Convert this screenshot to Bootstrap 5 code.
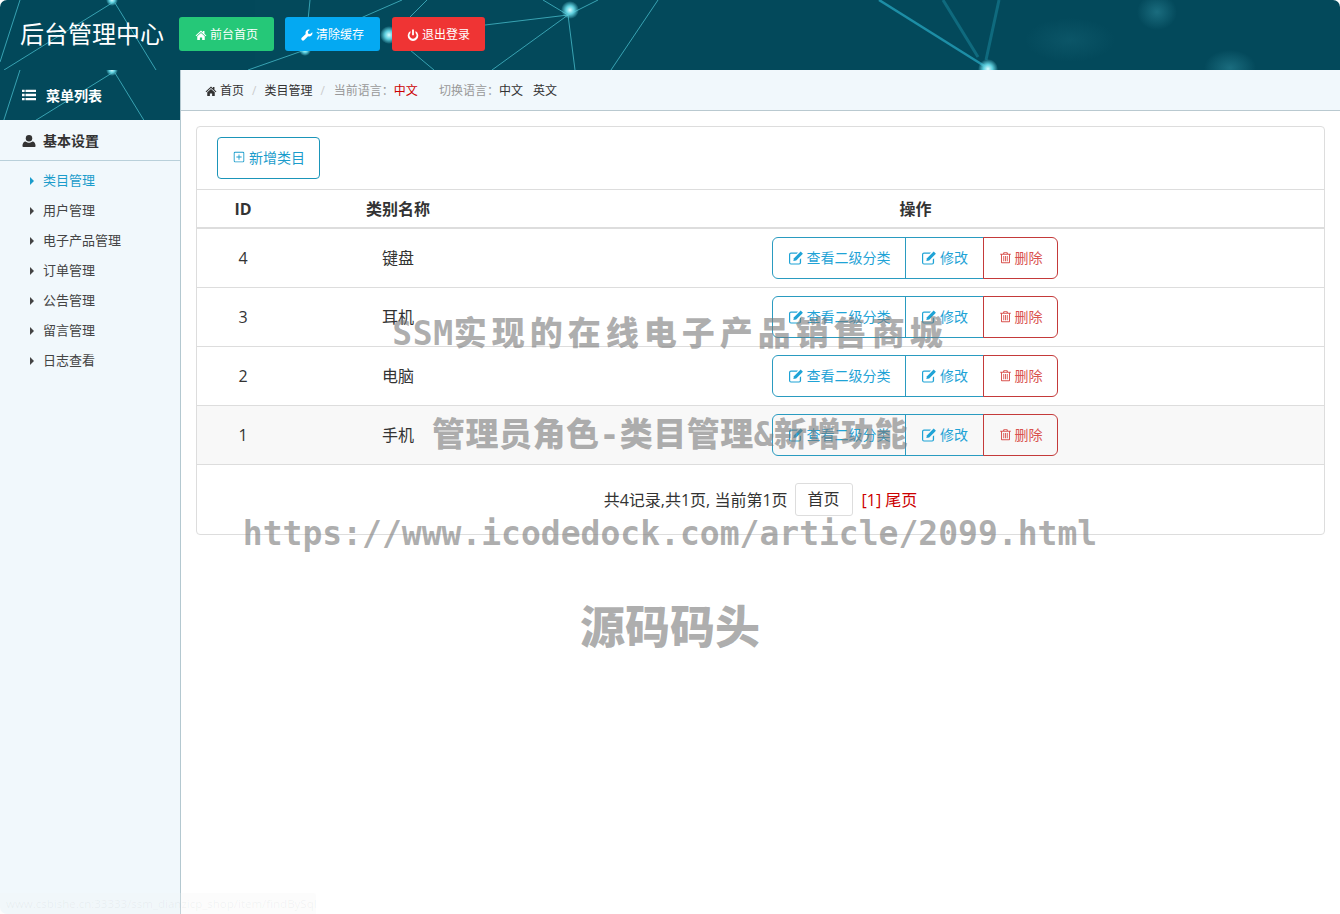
<!DOCTYPE html>
<html lang="zh-CN">
<head>
  <meta charset="UTF-8">
  <meta name="viewport" content="width=device-width, initial-scale=1.0">
  <title>后台管理中心</title>
  <link href="https://cdn.jsdelivr.net/npm/bootstrap@5.3.0/dist/css/bootstrap.min.css" rel="stylesheet">
  <style>
    html, body { height: 100%; }
    body {
      position: relative;
      font-family: "Open Sans", "Noto Sans CJK SC", sans-serif;
      color: #333;
      overflow: hidden;
    }
    .ico { width: 1em; height: 1em; fill: currentColor; flex: none; }

    /* header */
    .top-bar {
      position: relative;
      height: 70px;
      background: #03495b;
      border-radius: 7px 7px 0 0;
      overflow: hidden;
    }
    .net-bg { position: absolute; left: 0; top: 0; }
    .brand-title { position: relative; width: 179px; padding: 0 0 2px 20px; font-size: 24px; color: #fff; line-height: 34px; }
    .top-btn {
      position: relative;
      height: 34px;
      width: 95px;
      margin: 0 11px 2px 0;
      padding: 1px 0 0;
      font-size: 12px;
      color: #fff;
      border: 0;
      border-radius: 3px;
      display: inline-flex;
      align-items: center;
      justify-content: center;
      gap: 3px;
    }
    .top-btn:hover { color: #fff; }
    .top-btn .ico { font-size: 12px; }
    .tb-green { background: #25c878; }
    .tb-blue { background: #04a9f2; margin-right: 12px; }
    .tb-red { background: #ef3434; width: 93px; }

    /* sidebar */
    .page-body { height: 844px; }
    .side-col { width: 181px; background: #f1f8fc; border-right: 1px solid #b3c8d0; flex: none; border-bottom-left-radius: 7px; }
    .side-head { position: relative; height: 50px; background: #03495b; overflow: hidden; color: #fff; }
    .side-head-in { position: relative; height: 100%; padding-left: 22px; font-size: 14px; font-weight: 700; gap: 10px; }
    .side-group { height: 41px; padding: 1px 0 0 22px; gap: 7px; font-size: 14px; font-weight: 700; color: #333; border-bottom: 1px solid #b9d0da; }
    .side-menu { padding-top: 5px; }
    .side-menu a { height: 30px; padding-left: 30px; gap: 9px; font-size: 13px; color: #444; text-decoration: none; }
    .side-menu a.on { color: #1b9ccb; }
    .side-caret { width: 0; height: 0; border-left: 4px solid currentColor; border-top: 4px solid transparent; border-bottom: 4px solid transparent; }

    /* crumbs */
    .crumb-bar { height: 41px; background: #f1f8fc; border-bottom: 1px solid #b9c9d0; padding: 2px 0 0 24px; font-size: 12px; color: #333; }
    .crumb-bar a { color: #333; text-decoration: none; }
    .crumb-home { gap: 3px; }
    .crumb-sep { color: #ccc; margin: 0 8px; }
    .crumb-sep-b { margin-right: 9px; }
    .crumb-mute { color: #999; }
    .crumb-red { color: #c00; }
    .crumb-gap { margin-left: 21px; }
    .crumb-next { margin-left: 10px; }

    /* panel */
    .main-wrap { padding: 15px; flex: 1; min-width: 0; }
    .data-panel { border: 1px solid #ddd; border-radius: 4px; height: 409px; }
    .panel-tools { height: 63px; padding: 10px 20px; border-bottom: 1px solid #ddd; }
    .btn-add {
      width: 103px; height: 42px; padding: 0 0 2px; font-size: 14px;
      color: #1b9ccb; border: 1px solid #1b95b9; border-radius: 4px;
      display: flex; align-items: center; justify-content: center; gap: 3px;
    }
    .cat-table { table-layout: fixed; margin: 0; }
    .cat-table th, .cat-table td { text-align: center; vertical-align: middle; padding: 0; border-color: #ddd; color: #333; }
    .cat-table th { height: 38px; padding-top: 1px; font-size: 16px; border-bottom: 2px solid #ddd; }
    .cat-table td { height: 59px; font-size: 16px; }
    .cat-table td:last-child { padding-right: 1px; }
    .cat-table tr.row-hl td { background: #f8f8f8; }
    .op-group .btn {
      height: 42px; padding: 0; font-size: 14px; background: transparent;
      display: flex; align-items: center; justify-content: center; gap: 3px;
    }
    .op-group .ico { font-size: 16px; }
    .op-group .op-red .ico { font-size: 13px; }
    .op-blue { color: #1fa3d6; border: 1px solid #2a9bc0; }
    .op-red { color: #d9534f; border: 1px solid #c43a3a; }
    .op-w1 { width: 134px; }
    .op-w2 { width: 79px; }
    .op-w3 { width: 75px; }
    .pager-row { height: 69px; font-size: 16px; color: #333; }
    .pager-row > span { padding-top: 2px; }
    .pager-first { height: 33px; width: 58px; margin: 0 9px 0 7px; border: 1px solid #ddd; border-radius: 3px; color: #333; text-decoration: none; }
    .pager-red { color: #c00; }

    /* overlay */
    .wm-layer { position: absolute; left: 0; right: 0; top: 284px; pointer-events: none; color: rgba(120,120,120,.6); font-weight: 900; }
    .wm-line { height: 100px; line-height: 100px; white-space: nowrap; font-family: "DejaVu Sans Mono", "Noto Sans CJK SC", monospace; font-size: 33px; }
    .wm-a { height: 101px; letter-spacing: 5px; }
    .wm-a span { letter-spacing: .6px; }
    .wm-b { height: 99px; letter-spacing: .5px; }
    .wm-c { height: 96px; letter-spacing: 0; }
    .wm-d { font-size: 45px; line-height: 90px; font-family: "Noto Sans CJK SC", sans-serif; }
    .url-tip { position: absolute; left: 0; bottom: 0; width: 316px; height: 21px; padding: 2px 0 0 6px; font-size: 11.5px; background: rgba(245,245,245,.25); color: rgba(120,130,135,.08); border-top-right-radius: 3px; white-space: nowrap; }
  </style>
</head>
<body>

  <svg width="0" height="0" class="position-absolute">
    <defs>
      <symbol id="i-home" viewBox="0 0 16 16"><path d="M8 2 .8 8.6l.9 1L8 3.9l6.3 5.700.9-1L12.600 6.200V2.800h-2v1.600zM3 9.800v4.700h3.500v-3.300h3v3.300H13V9.800L8 5.300z"/></symbol>
      <symbol id="i-wrench" viewBox="0 0 16 16"><path d="M15 4.200l-2.800 2.600-2.500-.6-.7-2.400L11.800 1A4.300 4.300 0 0 0 6.300 6.500L1 11.800a2.200 2.200 0 0 0 3.100 3.100l5.300-5.300A4.300 4.300 0 0 0 15 4.200z"/></symbol>
      <symbol id="i-power" viewBox="0 0 16 16"><path d="M6.800 .8h2.400v7.400H6.800z"/><path d="M4.600 2.800v2.600a4.500 4.500 0 1 0 6.800 0V2.800a7 7 0 1 1-6.800 0z"/></symbol>
      <symbol id="i-list" viewBox="0 0 16 16"><path d="M0 2h3v2.600H0zM4 2h12v2.600H4zM0 6.700h3v2.600H0zM4 6.700h12v2.600H4zM0 11.400h3V14H0zM4 11.400h12V14H4z"/></symbol>
      <symbol id="i-user" viewBox="0 0 16 16"><circle cx="8" cy="4.800" r="3.700"/><path d="M1.500 14.800c-.6 0-1-.4-1-1 0-3 1.500-5.300 3.600-5.300C5 9.300 6.400 9.900 8 9.900s3-.6 3.900-1.400c2.100 0 3.600 2.300 3.600 5.300 0 .6-.4 1-1 1z"/></symbol>
      <symbol id="i-plus" viewBox="0 0 16 16"><path fill-rule="evenodd" d="M3.500 2h9A1.500 1.500 0 0 1 14 3.500v9a1.500 1.500 0 0 1-1.500 1.500h-9A1.500 1.500 0 0 1 2 12.500v-9A1.500 1.500 0 0 1 3.500 2zm0 1a.5.5 0 0 0-.5.500v9a.5.5 0 0 0 .5.500h9a.5.5 0 0 0 .5-.5v-9a.5.5 0 0 0-.5-.5zM7.500 5h1v2.500H11v1H8.500V11h-1V8.500H5v-1h2.500z"/></symbol>
      <symbol id="i-edit" viewBox="0 0 16 16"><path d="M3 2.500h7l-1.300 1.300H3.200c-.6 0-1 .4-1 1v7.600c0 .6.400 1 1 1h7.600c.6 0 1-.4 1-1V9.500l1.300-1.300v4.300a2 2 0 0 1-2 2H3a2 2 0 0 1-2-2V4.500a2 2 0 0 1 2-2z"/><path d="M12.700 1.500l2.200 2.200-6.700 6.700-2.900.7.700-2.900z"/></symbol>
      <symbol id="i-trash" viewBox="0 0 16 16"><path d="M5.700 1.500h4.600l.8 1.800H14.500v1.200h-1V14a1 1 0 0 1-1 1h-9a1 1 0 0 1-1-1V4.500h-1V3.300h3.400zM6.400 3.300h3.200l-.3-.7H6.700zM3.700 4.500v9.300h8.600V4.500z"/><path d="M5.300 6h1.100v6.500H5.300zM7.450 6h1.100v6.500h-1.100zM9.600 6h1.100v6.500H9.600z"/></symbol>
      <radialGradient id="glow">
        <stop offset="0" stop-color="#d8fbff"/>
        <stop offset=".45" stop-color="#5fd0df"/>
        <stop offset="1" stop-color="#5fd0df" stop-opacity="0"/>
      </radialGradient>
      <radialGradient id="soft">
        <stop offset="0" stop-color="#2a8496" stop-opacity=".6"/>
        <stop offset="1" stop-color="#2a8496" stop-opacity="0"/>
      </radialGradient>
      <symbol id="net-lines" viewBox="0 0 1340 70" width="1340" height="70">
        <g stroke="#46b9c8" stroke-width="1" fill="none" opacity=".8">
          <path d="M20 0 0 62M112 3 4 70M115 3 156 70"/>
          <path d="M310 0 305 50 248 70M402 0 363 17 305 50M427 0 410 17M410 50 434 70"/>
          <path d="M568 15 485 25M568 15 492 70M568 15 575 70M543 0 568 15M598 0 568 15M658 0 611 70"/>
        </g>
        <g fill="none">
          <path d="M879 0 986 67" stroke="#1d8ea6" stroke-width="2.500"/>
          <path d="M943 0 978 57M999 0 986 60" stroke="#0f6a7e" stroke-width="3"/>
        </g>
        <ellipse cx="1157" cy="12" rx="20" ry="18" fill="url(#soft)"/>
        <ellipse cx="1230" cy="68" rx="26" ry="18" fill="url(#soft)"/>
        <ellipse cx="1070" cy="40" rx="45" ry="22" fill="url(#soft)" opacity=".35"/>
        <circle cx="112" cy="0" r="6" fill="url(#glow)"/>
        <circle cx="305" cy="50" r="6" fill="url(#glow)"/>
        <circle cx="389" cy="35" r="9" fill="url(#glow)"/>
        <circle cx="570" cy="10" r="9" fill="url(#glow)"/>
        <circle cx="988" cy="69" r="10" fill="url(#glow)"/>
      </symbol>
    </defs>
  </svg>

  <!-- 顶部 -->
  <header class="top-bar d-flex align-items-center">
    <svg class="net-bg" width="1340" height="70"><use href="#net-lines"/></svg>
    <div class="brand-title">后台管理中心</div>
    <a href="#" class="btn top-btn tb-green"><svg class="ico"><use href="#i-home"/></svg>前台首页</a>
    <a href="#" class="btn top-btn tb-blue"><svg class="ico"><use href="#i-wrench"/></svg>清除缓存</a>
    <a href="#" class="btn top-btn tb-red"><svg class="ico"><use href="#i-power"/></svg>退出登录</a>
  </header>

  <div class="page-body d-flex">
    <!-- 左侧菜单 -->
    <aside class="side-col">
      <div class="side-head">
        <svg class="net-bg" width="180" height="50" viewBox="0 0 180 50"><use href="#net-lines"/></svg>
        <div class="side-head-in d-flex align-items-center"><svg class="ico"><use href="#i-list"/></svg>菜单列表</div>
      </div>
      <div class="side-group d-flex align-items-center"><svg class="ico"><use href="#i-user"/></svg>基本设置</div>
      <nav class="side-menu">
        <a href="#" class="d-flex align-items-center on"><span class="side-caret"></span>类目管理</a>
        <a href="#" class="d-flex align-items-center"><span class="side-caret"></span>用户管理</a>
        <a href="#" class="d-flex align-items-center"><span class="side-caret"></span>电子产品管理</a>
        <a href="#" class="d-flex align-items-center"><span class="side-caret"></span>订单管理</a>
        <a href="#" class="d-flex align-items-center"><span class="side-caret"></span>公告管理</a>
        <a href="#" class="d-flex align-items-center"><span class="side-caret"></span>留言管理</a>
        <a href="#" class="d-flex align-items-center"><span class="side-caret"></span>日志查看</a>
      </nav>
    </aside>

    <div class="flex-grow-1 d-flex flex-column" style="min-width:0">
      <div class="crumb-bar d-flex align-items-center">
        <a href="#" class="d-flex align-items-center crumb-home"><svg class="ico"><use href="#i-home"/></svg>首页</a>
        <span class="crumb-sep">/</span>
        <a href="#">类目管理</a>
        <span class="crumb-sep crumb-sep-b">/</span>
        <span class="crumb-mute">当前语言：</span><span class="crumb-red">中文</span>
        <span class="crumb-mute crumb-gap">切换语言：</span>
        <a href="#">中文</a>
        <a href="#" class="crumb-next">英文</a>
      </div>

      <div class="main-wrap">
        <div class="data-panel">
          <div class="panel-tools">
            <a href="#" class="btn btn-add"><svg class="ico"><use href="#i-plus"/></svg>新增类目</a>
          </div>
          <table class="table cat-table">
            <colgroup>
              <col style="width:92px">
              <col style="width:218px">
              <col>
            </colgroup>
            <thead>
              <tr><th>ID</th><th>类别名称</th><th>操作</th></tr>
            </thead>
            <tbody>
              <tr>
                <td>4</td><td>键盘</td>
                <td><div class="btn-group op-group">
                  <a href="#" class="btn op-blue op-w1"><svg class="ico"><use href="#i-edit"/></svg>查看二级分类</a>
                  <a href="#" class="btn op-blue op-w2"><svg class="ico"><use href="#i-edit"/></svg>修改</a>
                  <a href="#" class="btn op-red op-w3"><svg class="ico"><use href="#i-trash"/></svg>删除</a>
                </div></td>
              </tr>
              <tr>
                <td>3</td><td>耳机</td>
                <td><div class="btn-group op-group">
                  <a href="#" class="btn op-blue op-w1"><svg class="ico"><use href="#i-edit"/></svg>查看二级分类</a>
                  <a href="#" class="btn op-blue op-w2"><svg class="ico"><use href="#i-edit"/></svg>修改</a>
                  <a href="#" class="btn op-red op-w3"><svg class="ico"><use href="#i-trash"/></svg>删除</a>
                </div></td>
              </tr>
              <tr>
                <td>2</td><td>电脑</td>
                <td><div class="btn-group op-group">
                  <a href="#" class="btn op-blue op-w1"><svg class="ico"><use href="#i-edit"/></svg>查看二级分类</a>
                  <a href="#" class="btn op-blue op-w2"><svg class="ico"><use href="#i-edit"/></svg>修改</a>
                  <a href="#" class="btn op-red op-w3"><svg class="ico"><use href="#i-trash"/></svg>删除</a>
                </div></td>
              </tr>
              <tr class="row-hl">
                <td>1</td><td>手机</td>
                <td><div class="btn-group op-group">
                  <a href="#" class="btn op-blue op-w1"><svg class="ico"><use href="#i-edit"/></svg>查看二级分类</a>
                  <a href="#" class="btn op-blue op-w2"><svg class="ico"><use href="#i-edit"/></svg>修改</a>
                  <a href="#" class="btn op-red op-w3"><svg class="ico"><use href="#i-trash"/></svg>删除</a>
                </div></td>
              </tr>
            </tbody>
          </table>
          <div class="pager-row d-flex align-items-center justify-content-center">
            <span>共4记录,共1页, 当前第1页</span>
            <a href="#" class="pager-first d-flex align-items-center justify-content-center">首页</a>
            <span class="pager-red">[1] 尾页</span>
          </div>
        </div>
      </div>
    </div>
  </div>

  <!-- 水印 -->
  <div class="wm-layer d-flex flex-column align-items-center">
    <div class="wm-line wm-a"><span>SSM</span>实现的在线电子产品销售商城</div>
    <div class="wm-line wm-b">管理员角色-类目管理&amp;新增功能</div>
    <div class="wm-line wm-c">https://www.icodedock.com/article/2099.html</div>
    <div class="wm-line wm-d">源码码头</div>
  </div>

  <div class="url-tip">www.csbishe.cn:33333/ssm_dianzicp_shop/item/findBySql</div>

  <script src="https://cdn.jsdelivr.net/npm/bootstrap@5.3.0/dist/js/bootstrap.bundle.min.js"></script>
</body>
</html>
